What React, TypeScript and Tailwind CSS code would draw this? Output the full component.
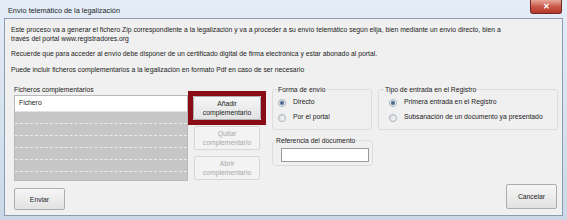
import React from 'react';

const font = { fontFamily: '"Liberation Sans", Arial, sans-serif' };

function Radio({ checked, label }: { checked?: boolean; label: string }) {
  return (
    <div className="flex items-center h-[15px]">
      <span className="w-[8px] h-[8px] rounded-full border border-[#a9b2bc] bg-gradient-to-br from-[#d9dde2] to-[#f7f8f9] flex items-center justify-center">
        {checked && <span className="w-[4px] h-[4px] rounded-full bg-[#4b6a8e]" />}
      </span>
      <span className="ml-[7px] text-[6.8px] text-[#222]">{label}</span>
    </div>
  );
}

function Btn({ children, disabled, className = '' }: { children: React.ReactNode; disabled?: boolean; className?: string }) {
  return (
    <div
      className={`flex items-center justify-center text-center leading-[9px] text-[6.8px] rounded-[2px] border ${
        disabled
          ? 'border-[#d6d6d6] bg-[#f3f3f3] text-[#a8a8a8]'
          : 'border-[#adadad] bg-gradient-to-b from-[#f6f6f6] to-[#e2e2e2] text-[#222]'
      } ${className}`}
    >
      {children}
    </div>
  );
}

export default function App() {
  return (
    <div className="w-[567px] h-[220px] flex flex-col bg-gradient-to-b from-[#e4edf7] to-[#cad8e7] overflow-hidden" style={font}>
      {/* Title bar */}
      <div className="h-[18px] flex items-start justify-between pl-[8px] pr-[5px]">
        <span className="mt-[6px] text-[7.3px] leading-[9px] text-[#1e1e1e]">Envío telemático de la legalización</span>
        <div className="w-[32px] h-[14px] rounded-b-[3px] border border-t-0 border-[#6e2a22] bg-gradient-to-b from-[#e8a89c] via-[#c9584a] to-[#b6382b] flex items-center justify-center">
          <span className="text-white text-[8px] font-bold leading-none">✕</span>
        </div>
      </div>

      {/* Client area */}
      <div className="mx-[4px] h-[198px] border border-[#8c9bb0] bg-[#f0f0f0] flex flex-col text-[#222]">
        <div className="pl-[6px] pt-[6px] text-[6.8px] leading-[9px] whitespace-nowrap">
          <p>
            Este proceso va a generar el fichero Zip correspondiente a la legalización y va a proceder a su envío telemático según elija, bien mediante un envío directo, bien a
            <br />
            través del portal www.registradores.org
          </p>
          <p className="mt-[6px]">Recuerde que para acceder al envío debe disponer de un certificado digital de firma electrónica y estar abonado al portal.</p>
          <p className="mt-[7px]">Puede incluir ficheros complementarios a la legalización en formato Pdf en caso de ser necesario</p>
        </div>

        {/* Main row */}
        <div className="mt-[11px] h-[96px] flex items-start pl-[9px]">
          <div className="w-[174px] flex flex-col">
            <span className="h-[9px] text-[6.8px] leading-[9px]">Ficheros complementarios</span>
            <div className="mt-[1px] h-[86px] border border-[#b9b9b9] bg-[#c6c6c6] flex flex-col overflow-hidden">
              <div className="h-[16px] bg-white flex items-center pl-[4px] text-[6.8px] border-b border-[#e2e2e2]">Fichero</div>
              {[0, 1, 2, 3, 4].map(i => (
                <div key={i} className="h-[12px] border-b border-dashed border-[#ebebeb]" />
              ))}
            </div>
          </div>

          <div className="mt-[6px] w-[78px] flex flex-col items-center">
            <div className="w-[78px] h-[34px] border-[5px] border-[#8a0c16]">
              <Btn className="w-full h-full">Añadir<br />complementario</Btn>
            </div>
            <Btn disabled className="mt-[1px] w-[66px] h-[24px]">Quitar<br />complementario</Btn>
            <Btn disabled className="mt-[6px] w-[66px] h-[24px]">Abrir<br />complementario</Btn>
          </div>

          <div className="ml-[6px] flex flex-col">
            <fieldset className="w-[100px] h-[45px] border border-[#dcdcdc] rounded-[3px] px-[5px]">
              <legend className="text-[6.8px] leading-[9px] px-[1px] ml-[-1px]">Forma de envío</legend>
              <div className="mt-[1px]">
                <Radio checked label="Directo" />
                <Radio label="Por el portal" />
              </div>
            </fieldset>
            <fieldset className="mt-[6px] w-[100px] h-[30px] border border-[#dcdcdc] rounded-[3px] px-[3px]">
              <legend className="text-[6.8px] leading-[9px] px-[1px] ml-[-1px]">Referencia del documento</legend>
              <div className="mt-[3px] ml-[5px] w-[88px] h-[14px] bg-white border border-[#9a9a9a]" />
            </fieldset>
          </div>

          <fieldset className="ml-[5px] w-[180px] h-[45px] border border-[#dcdcdc] rounded-[3px] px-[10px]">
            <legend className="text-[6.8px] leading-[9px] px-[1px] ml-[-5px]">Tipo de entrada en el Registro</legend>
            <div className="mt-[1px]">
              <Radio checked label="Primera entrada en el Registro" />
              <Radio label="Subsanación de un documento ya presentado" />
            </div>
          </fieldset>
        </div>

        {/* Bottom row */}
        <div className="flex items-start justify-between pl-[9px] pr-[5px]">
          <Btn className="mt-[7px] w-[51px] h-[22px]">Enviar</Btn>
          <Btn className="mt-[3px] w-[51px] h-[25px]">Cancelar</Btn>
        </div>
      </div>
    </div>
  );
}
